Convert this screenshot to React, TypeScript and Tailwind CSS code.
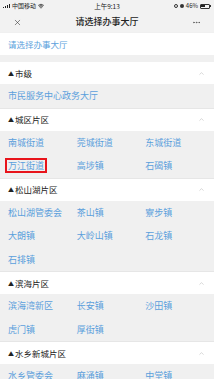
import { X, MoreHorizontal, ChevronUp, Wifi } from "lucide-react";

type Section = { title: string; items: string[] };

const sections: Section[] = [
  { title: "市级", items: ["市民服务中心政务大厅"] },
  {
    title: "城区片区",
    items: ["南城街道", "莞城街道", "东城街道", "万江街道", "高埗镇", "石碣镇"],
  },
  {
    title: "松山湖片区",
    items: ["松山湖管委会", "茶山镇", "寮步镇", "大朗镇", "大岭山镇", "石龙镇", "石排镇"],
  },
  {
    title: "滨海片区",
    items: ["滨海湾新区", "长安镇", "沙田镇", "虎门镇", "厚街镇"],
  },
  { title: "水乡新城片区", items: ["水乡管委会", "麻涌镇", "中堂镇"] },
];

function StatusBar() {
  return (
    <div className="flex h-[12px] items-center justify-between px-[3px] text-[6px] leading-none text-[#222]">
      <div className="flex w-[60px] items-center gap-[2px]">
        <div className="flex items-end gap-[1px]">
          <span className="h-[1.5px] w-[1px] bg-[#222]" />
          <span className="h-[2.5px] w-[1px] bg-[#222]" />
          <span className="h-[3.5px] w-[1px] bg-[#222]" />
          <span className="h-[4.5px] w-[1px] bg-[#222]" />
        </div>
        <span>中国移动</span>
        <Wifi className="size-[6px]" strokeWidth={3} />
      </div>
      <span className="text-[6.5px]">上午9:13</span>
      <div className="flex w-[60px] items-center justify-end gap-[2px]">
        <span className="size-[4px] rounded-full border border-[#333]" />
        <span className="size-[4px] rounded-full bg-[#333]" />
        <span>46%</span>
        <div className="flex items-center">
          <div className="flex h-[5px] w-[10px] items-center rounded-[1px] border border-[#333] p-[0.5px]">
            <div className="h-full w-[4px] bg-[#222]" />
          </div>
          <span className="h-[2px] w-[1px] bg-[#333]" />
        </div>
      </div>
    </div>
  );
}

function Header({ title }: { title: string }) {
  return (
    <div className="flex h-[22px] items-center justify-between bg-white pl-[8px] pr-[9px]">
      <div className="flex items-center gap-[1px] text-[8.5px] text-[#222]">
        <span className="text-[6px]">▲</span>
        <span>{title}</span>
      </div>
      <ChevronUp className="size-[7px] text-[#bbb]" strokeWidth={2} />
    </div>
  );
}

export default function App() {
  return (
    <div
      className="h-[379px] w-[214px] overflow-hidden bg-[#f0f0f0]"
      style={{ fontFamily: '"Noto Sans CJK SC", "Noto Sans", sans-serif' }}
    >
      <div className="bg-[#f2f2f2]">
        <StatusBar />
        <div className="flex h-[20px] items-center justify-between px-[13px]">
          <X className="size-[9px] text-[#333]" strokeWidth={1.5} />
          <span className="text-[9px] font-medium text-[#222]">请选择办事大厅</span>
          <MoreHorizontal className="size-[9px] text-[#555]" strokeWidth={2} />
        </div>
      </div>
      <div className="mt-[1px] flex h-[22px] items-center bg-white px-[8px] text-[8.5px] text-[#5b9fdc]">
        请选择办事大厅
      </div>
      <div className="h-[7px]" />
      {sections.map((s) => (
        <div key={s.title}>
          <Header title={s.title} />
          <div className="grid grid-cols-3 border-b border-[#e6e6e6] pl-[8px]">
            {s.items.map((it) => (
              <div key={it} className="flex h-[23.5px] items-center">
                {it === "万江街道" ? (
                  <span className="-ml-[3px] border-2 border-[#e8141b] px-[1px] text-[9px] leading-[11px] text-[#5b9fdc]">
                    {it}
                  </span>
                ) : (
                  <span className="whitespace-nowrap text-[9px] text-[#5b9fdc]">{it}</span>
                )}
              </div>
            ))}
          </div>
        </div>
      ))}
    </div>
  );
}
